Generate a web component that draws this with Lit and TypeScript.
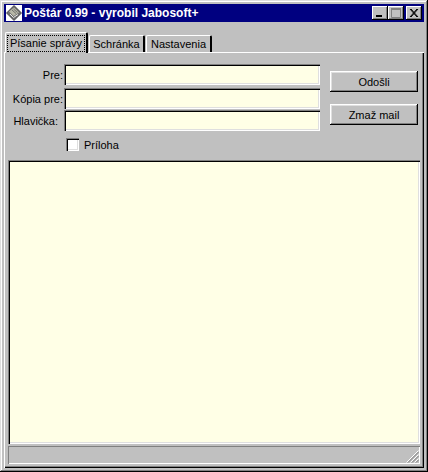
import { LitElement, html, css } from "lit";
import { customElement } from "lit/decorators.js";

@customElement("app-root")
export class AppRoot extends LitElement {
  static styles = css`
    :host { display: block; width: 428px; height: 472px; font-family: "Liberation Sans", Arial, sans-serif; font-size: 11px; color: #000; }
    * { box-sizing: border-box; }
    .win { width: 428px; height: 472px; background: #c0c0c0; padding: 4px; display: flex; flex-direction: column;
      box-shadow: inset -1px -1px 0 #000, inset 1px 1px 0 #dfdfdf, inset -2px -2px 0 #808080, inset 2px 2px 0 #fff; }
    .title { height: 18px; background: #000080; color: #fff; display: flex; align-items: center; padding: 0 2px; flex: none; }
    .title-icon { width: 16px; height: 16px; margin-right: 2px; flex: none; display: block; }
    .title-text { font-size: 12px; font-weight: 700; flex: 1; white-space: nowrap; }
    .cap { width: 16px; height: 14px; background: #c0c0c0; display: block; padding: 0; border: 0;
      box-shadow: inset -1px -1px 0 #000, inset 1px 1px 0 #fff, inset -2px -2px 0 #808080; }
    .cap svg { display: block; }
    .cap.close { margin-left: 2px; }
    .tabs { display: flex; align-items: flex-end; height: 30px; padding-left: 1px; flex: none; }
    .tab { height: 17px; line-height: 16px; text-align: center; font-size: 11px; background: #c0c0c0; border-top: 1px solid #fff; border-left: 1px solid #fff; border-right: 2px solid #000; border-radius: 2px 2px 0 0; }
    .t2 { width: 56px; margin-left: 1px; }
    .t3 { width: 66px; margin-left: 1px; }
    .tab.sel { width: 83px; height: 21px; padding: 3px 2px 0 2px; position: relative; z-index: 1; margin-bottom: -1px; }
    .tab.sel span { display: block; outline: 1px dotted #000; height: 15px; line-height: 14px; }
    .panel { flex: 1; min-height: 0; display: flex; flex-direction: column; padding: 12px 4px 2px;
      box-shadow: inset 0 1px 0 #fff, inset 1px 0 0 #fff, inset -1px 0 0 #000, inset 0 -1px 0 #000, inset -2px 0 0 #808080, inset 0 -2px 0 #808080; background: #c0c0c0; }
    .form { display: grid; grid-template-columns: 56px 256px 1fr; flex: none; height: 96px; }
    .rows { grid-column: 1 / 3; display: flex; flex-direction: column; }
    .row { display: flex; align-items: center; }
    .row label { width: 56px; padding-right: 1px; text-align: right; font-size: 11px; white-space: nowrap; flex: none; }
    .row.l1 { height: 21px; margin-bottom: 3px; }
    .row.l2 { height: 21px; margin-bottom: 1px; }
    .row.l3 { height: 21px; margin-bottom: 7px; }
    .row.l3 label { padding-right: 6px; }
    .edit { width: 256px; height: 21px; background: #ffffe6;
      box-shadow: inset 1px 1px 0 #808080, inset 2px 2px 0 #000, inset -1px -1px 0 #fff, inset -2px -2px 0 #dfdfdf; }
    .chk { display: flex; align-items: center; padding-left: 58px; height: 13px; font-size: 11px; }
    .box { width: 13px; height: 13px; background: #fff; margin-right: 5px; flex: none;
      box-shadow: inset 1px 1px 0 #808080, inset 2px 2px 0 #000, inset -1px -1px 0 #fff, inset -2px -2px 0 #dfdfdf; }
    .btns { padding: 7px 0 0 10px; display: flex; flex-direction: column; gap: 12px; grid-column: 3; }
    .btn { width: 88px; height: 21px; display: flex; align-items: center; justify-content: center; font-size: 11px; background: #c0c0c0;
      box-shadow: inset -1px -1px 0 #000, inset 1px 1px 0 #fff, inset -2px -2px 0 #808080, inset 2px 2px 0 #dfdfdf; }
    .memo { height: 284px; width: 412px; flex: none; background: #ffffe6;
      box-shadow: inset 1px 1px 0 #808080, inset 2px 2px 0 #000, inset -1px -1px 0 #fff, inset -2px -2px 0 #dfdfdf; }
    .status { margin-top: 2px; width: 412px; height: 18px; flex: none; position: relative;
      box-shadow: inset 1px 1px 0 #808080, inset -1px -1px 0 #fff; }
    .grip { position: absolute; right: 1px; bottom: 1px; display: block; }
  `;

  render() {
    return html`<div class="win">
      <div class="title">
        <svg class="title-icon" viewBox="0 0 16 16">
          <rect width="16" height="16" fill="#fff"/>
          <path d="M8 0.5 15.5 8 8 15.5 0.5 8Z" fill="#707070" stroke="#303030" stroke-width=".8"/>
          <path d="M8 2.5 13 7.5 7.5 11 3 6.5Z" fill="#b8b8a8"/>
          <path d="M4 9 7.5 12.5 12 9.5" fill="none" stroke="#e8e8e8"/>
          <path d="M6 5 10 8.5M7.5 4 11.5 7.5" stroke="#606060" stroke-width=".8"/>
        </svg>
        <span class="title-text">Poštár 0.99 - vyrobil Jabosoft+</span>
        <span class="cap"><svg width="16" height="14"><rect x="4" y="9" width="6" height="2" fill="#000"/></svg></span>
        <span class="cap"><svg width="16" height="14"><path d="M3.5 2.5h9v9h-9z" fill="none" stroke="#808080"/><rect x="3" y="2" width="10" height="2" fill="#808080"/></svg></span>
        <span class="cap close"><svg width="16" height="14"><path d="M4 3 11 11M5 3 12 11M11 3 4 11M12 3 5 11" stroke="#000" fill="none"/></svg></span>
      </div>
      <div class="tabs">
        <div class="tab sel"><span>Písanie správy</span></div>
        <div class="tab t2">Schránka</div>
        <div class="tab t3">Nastavenia</div>
      </div>
      <div class="panel">
        <div class="form">
          <div class="rows">
            <div class="row l1"><label>Pre:</label><div class="edit"></div></div>
            <div class="row l2"><label>Kópia pre:</label><div class="edit"></div></div>
            <div class="row l3"><label>Hlavička:</label><div class="edit"></div></div>
            <div class="chk"><div class="box"></div>Príloha</div>
          </div>
          <div class="btns">
            <div class="btn">Odošli</div>
            <div class="btn">Zmaž mail</div>
          </div>
        </div>
        <div class="memo"></div>
        <div class="status">
          <svg class="grip" width="13" height="13"><path d="M12.5 0.5 0.5 12.5M12.5 4.5 4.5 12.5M12.5 8.5 8.5 12.5" stroke="#fff" fill="none"/><path d="M12.5 2 2 12.5M12.5 6 6 12.5M12.5 10 10 12.5" stroke="#808080" fill="none"/></svg>
        </div>
      </div>
    </div>`;
  }
}
